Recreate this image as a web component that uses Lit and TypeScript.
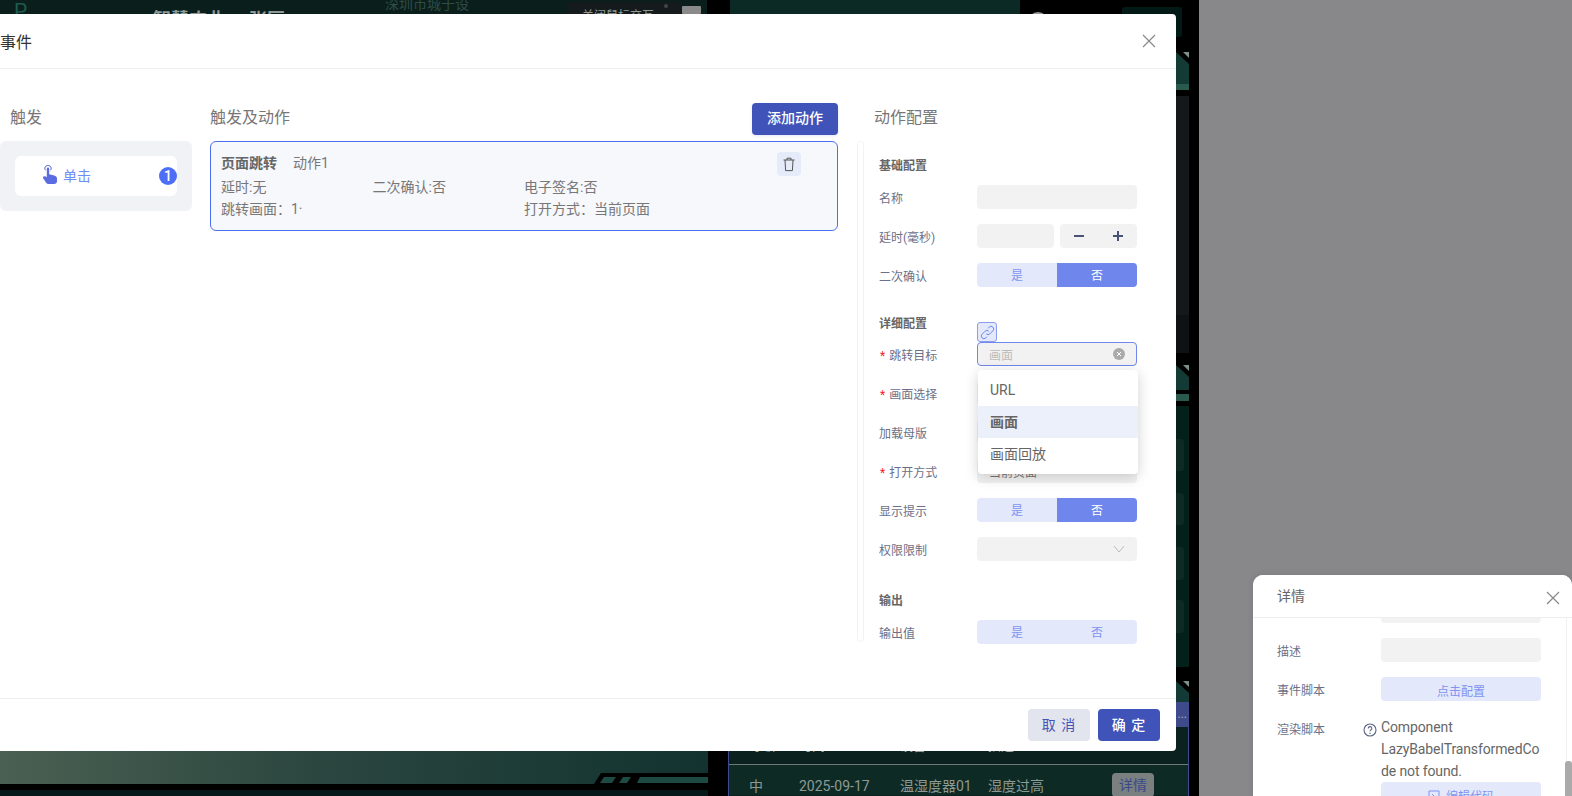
import { LitElement, html, css, svg } from "lit";
import { customElement } from "lit/decorators.js";

const closeIcon = html`<svg class="x" viewBox="0 0 14 14" width="14" height="14"><path d="M1 1 13 13M13 1 1 13" fill="none" stroke="#888" stroke-width="1.2"/></svg>`;

const backdrop = svg`
  <defs>
    <linearGradient id="bar" x1="0" x2="1" y1="0" y2="0">
      <stop offset="0" stop-color="#4a6052"/>
      <stop offset=".45" stop-color="#2b463f"/>
      <stop offset="1" stop-color="#123330"/>
    </linearGradient>
  </defs>
  <rect width="1199" height="796" fill="#000"/>
  <rect width="707" height="14" fill="#0a1f1b"/>
  <rect x="567" y="2" width="115" height="12" fill="#151b1c"/>
  <rect x="682" y="6" width="19" height="8" rx="1" fill="#8a8a8a"/>
  <circle cx="666" cy="6" r="2" fill="#444"/>
  <rect x="730" width="290" height="14" fill="#0b2a25"/>
  <circle cx="1038" cy="22" r="10" fill="#999"/>
  <rect x="1122" y="7" width="60" height="30" rx="3" fill="#021a16"/>
  <text x="14" y="18" font-size="21" fill="#1d5a4e">P</text>
  <text x="153" y="26" font-size="18" font-weight="700" fill="#8f9a96">智慧农业</text>
  <text x="249" y="26" font-size="18" font-weight="700" fill="#8f9a96">张匣</text>
  <text x="385" y="9" font-size="14" fill="#2e4c46">深圳市城于设</text>
  <text x="582" y="20" font-size="12" fill="#8f9a96">关闭鼠标交互</text>

  <path d="M1170 52h6l13 12v20h-19z" fill="#133a35"/>
  <path d="M1183 52h6v6z" fill="#7d9088"/>
  <rect x="1170" y="84" width="19" height="6" fill="#2a5a4d"/>
  <rect x="1170" y="96" width="19" height="219" fill="#15171a"/>
  <rect x="1170" y="315" width="19" height="38" fill="#101112"/>
  <path d="M1170 365h6l13 12v13h-19z" fill="#133a35"/>
  <path d="M1183 365h6v6z" fill="#7d9088"/>
  <rect x="1170" y="394" width="19" height="7" fill="#2a5a4d"/>
  <rect x="1170" y="406" width="19" height="261" fill="#04201b"/>
  <rect x="1170" y="439" width="14" height="32" rx="4" fill="#0e2a25"/>
  <rect x="1170" y="493" width="14" height="32" rx="4" fill="#0e2a25"/>
  <rect x="1170" y="547" width="14" height="33" rx="4" fill="#0e2a25"/>
  <rect x="1170" y="600" width="14" height="33" rx="4" fill="#0e2a25"/>
  <path d="M1170 681h6l13 12v9h-19z" fill="#133a35"/>
  <path d="M1183 681h6v6z" fill="#7d9088"/>

  <rect y="745" width="708" height="39" fill="url(#bar)"/>
  <path d="M594 784l7-11h107v11z" fill="#000"/>
  <path d="M600 783l4-6h12l-4 6zM619 783l4-6h8l-4 6zM637 783l3-6h68v6z" fill="#1d4a42"/>
  <rect y="790" width="708" height="6" fill="#06191a"/>
`;

@customElement("app-root")
export class AppRoot extends LitElement {
  static styles = css`
    :host { display: block; position: relative; width: 1572px; height: 796px; overflow: hidden; background: #88888a;
      font-family: Roboto, "Noto Sans CJK SC", sans-serif; color: #666; font-size: 14px; }
    * { box-sizing: border-box; }
    .scene { position: absolute; left: 0; top: 0; font-family: Roboto, "Noto Sans CJK SC", sans-serif; }

    .table { position: absolute; left: 728px; top: 702px; width: 461px; height: 94px;
      border-left: 1px solid #3f4a8f; border-right: 1px solid #3f4a8f; background: #0b211f; }
    .t-title { height: 25px; background: #3e4a8a; color: #aab; display: flex; justify-content: flex-end; padding-right: 1px; line-height: 24px; font-size: 12px; }
    .t-row { display: grid; grid-template-columns: 50px 111px 89px 98px 111px; }
    .t-row.head { height: 38px; line-height: 37px; color: #aab3b0; border-bottom: 1px solid #6d7a78; font-size: 13px; }
    .t-row.body { height: 30px; background: #0e2a25; color: #8d9a94; line-height: 42px; }
    .c0 { padding-left: 20px; } .c1 { padding-left: 20px; } .c2 { padding-left: 10px; } .c3 { padding-left: 9px; }
    .c4 { padding: 8px 0 0 35px; }
    .t-btn { display: block; width: 42px; height: 24px; border-radius: 4px; background: #7a7f80; color: #3a4a8a; text-align: center; line-height: 24px; }

    .modal { position: absolute; left: -20px; top: 14px; width: 1196px; height: 737px; background: #fff; border-radius: 4px;
      display: flex; flex-direction: column; }
    .m-head { height: 54px; flex: none; padding: 0 20px 0 20px; display: flex; align-items: center; justify-content: space-between; font-size: 16px; color: #333; }
    .m-body { flex: 1; border-top: 1px solid #eee; padding: 34px 0 0 20px; display: grid; grid-template-columns: 192px 628px 1fr; column-gap: 18px; min-height: 0; }
    .m-foot { flex: none; height: 53px; border-top: 1px solid #eee; padding: 10px 16px 0 0; display: flex; justify-content: flex-end; gap: 8px; }
    .btn { height: 32px; width: 62px; border-radius: 4px; text-align: center; line-height: 32px; font-size: 14px; letter-spacing: 1px; }
    .cancel { background: #e2e5ee; color: #4254b8; }
    .ok { background: #4053b8; color: #fff; font-weight: 500; }

    .col-head { height: 38px; display: flex; justify-content: space-between; align-items: flex-start; font-size: 16px; color: #777; line-height: 29px; }
    .col-head.pad { padding-left: 10px; }
    .col-head.pad-cfg { padding-left: 18px; }
    .add { height: 32px; width: 86px; background: #4053b8; color: #fff; border-radius: 4px; text-align: center; line-height: 31px; font-size: 14px; font-weight: 500; box-shadow: 0 1px 3px rgba(64,83,184,.15); }

    .trig { height: 70px; background: #f1f2f6; border-radius: 6px; padding: 15px; }
    .trig-item { height: 40px; background: #fff; border-radius: 6px; padding-left: 28px; display: flex; align-items: center; gap: 6px; color: #6f8cf5; font-size: 14px; }
    .trig-item svg { margin-top: -3px; }
    .trig-text { margin-top: -2px; }
    .badge { margin-left: auto; width: 18px; height: 18px; border-radius: 50%; background: #4f6ef7; color: #fff; text-align: center; line-height: 18px; font-size: 14px; font-weight: 500; }

    .card { position: relative; height: 90px; background: #f6f8fc; border: 1px solid #4c6ef0; border-radius: 6px; padding: 10px; color: #777; line-height: 22px; font-size: 14px; }
    .card-top { display: flex; gap: 16px; margin-bottom: 2px; }
    .card-top b { color: #666; font-weight: 700; font-size: 14px; }
    .card-grid { display: grid; grid-template-columns: 151.5px 151.5px 152px; }
    .trash { position: absolute; right: 36px; top: 10px; width: 24px; height: 24px; background: #e6ebfa; border-radius: 4px; display: flex; align-items: center; justify-content: center; }

    .cfg { min-width: 0; }
    .cfg-wrap { display: flex; }
    .track { flex: none; width: 7px; height: 501px; margin-left: 1px; border: 1px solid #f3f3f3; border-radius: 4px; }
    .form { padding: 17px 0 0 15px; flex: none; }
    .sec { height: 16px; line-height: 16px; font-size: 12px; font-weight: 700; color: #666; margin-bottom: 11px; }
    .sec.s2 { margin-top: 29px; margin-bottom: 10px; }
    .sec.s3 { margin-top: 32px; }
    .row { position: relative; display: flex; align-items: center; height: 24px; margin-bottom: 15px; font-size: 12px; color: #6b7088; }
    .row:last-child { margin-bottom: 0; }
    .lab { width: 98px; flex: none; }
    .req { color: #f5222d; margin: 0 4px 0 1px; }
    .inp { width: 160px; height: 24px; border-radius: 4px; background: #f2f2f2; position: relative; display: flex; align-items: center; padding-top: 1px; }
    .short { width: 77px; }
    .stepper { width: 77px; height: 24px; margin-left: 6px; background: #f2f2f2; border-radius: 4px; display: flex; align-items: center; justify-content: space-around; }
    .toggle { width: 160px; height: 24px; border-radius: 4px; background: #e3e8fb; display: grid; grid-template-columns: 1fr 1fr; overflow: hidden; text-align: center; line-height: 26px; color: #7f94f0; }
    .on { background: #6f87ec; color: #fff; }
    .link { position: absolute; left: 98px; top: -20px; width: 20px; height: 20px; border: 1px solid #8a9ef0; border-radius: 3px; background: #e3e8fb; display: flex; align-items: center; justify-content: center; }
    .sel { border: 1px solid #6f87ee; padding-left: 11px; color: #bbb; }
    .clear { position: absolute; right: 11px; top: 5px; }
    .chev { position: absolute; right: 12px; top: 8px; }
    .peek { padding-left: 12px; color: #777; }
    .drop { position: absolute; left: 99px; top: 28px; width: 160px; height: 104px; padding: 4px 0; background: #fff; border-radius: 4px; box-shadow: 0 3px 14px rgba(0,0,0,.18); z-index: 2; font-size: 14px; color: #666; }
    .opt { height: 32px; line-height: 32px; padding-left: 12px; }
    .opt.act { background: #ecf0fa; font-weight: 700; }

    .drawer { position: absolute; left: 1253px; top: 575px; width: 319px; height: 221px; overflow: hidden; background: #fff; border-radius: 10px 10px 0 0; box-shadow: 0 0 6px rgba(0,0,0,.1); }
    .d-head { height: 43px; border-bottom: 1px solid #eee; padding: 0 12px 0 24px; display: flex; align-items: center; justify-content: space-between; font-size: 14px; color: #666; position: relative; z-index: 1; background: #fff; }
    .d-head span { margin-top: -3px; }
    .d-head svg { margin-top: 4px; }
    .d-body { height: 197px; overflow: hidden; padding-left: 24px; margin-top: -19px; font-size: 12px; color: #6b7088; }
    .d-row { display: flex; margin-bottom: 15px; }
    .d-row.flush { margin-bottom: 0; }
    .d-lab { width: 104px; height: 24px; flex: none; line-height: 28px; position: relative; }
    .help { position: absolute; right: 4px; top: 7px; }
    .d-val { width: 160px; height: 24px; background: #f2f2f2; border-radius: 4px; }
    .d-btn { width: 160px; height: 24px; background: #e3e8fb; border-radius: 4px; color: #7f94f0; padding-top: 3px; display: flex; gap: 6px; align-items: center; justify-content: center; }
    .d-text { width: 160px; height: 66px; font-size: 14px; color: #666; line-height: 22px; letter-spacing: -.12px; overflow-wrap: anywhere; }
    .sb-line { position: absolute; left: 1566px; top: 618px; width: 1px; height: 178px; background: #f0f0f0; }
    .sb { position: absolute; left: 1565px; top: 761px; width: 7px; height: 35px; background: #aaa; border-radius: 3px 3px 0 0; }
  `;

  private yesNo(on: boolean) {
    return html`<div class="toggle"><span>是</span><span class=${on ? "on" : ""}>否</span></div>`;
  }

  render() {
    return html`
      <svg class="scene" width="1572" height="796" viewBox="0 0 1572 796">${backdrop}</svg>

      <div class="table">
        <div class="t-title"><span>...</span></div>
        <div class="t-row head"><span class="c0">等级</span><span class="c1">时间</span><span class="c2">设备</span><span class="c3">描述</span><span></span></div>
        <div class="t-row body">
          <span class="c0">中</span><span class="c1">2025-09-17</span><span class="c2">温湿度器01</span><span class="c3">湿度过高</span>
          <span class="c4"><span class="t-btn">详情</span></span>
        </div>
      </div>

      <section class="drawer">
        <div class="d-head"><span>详情</span>${closeIcon}</div>
        <div class="d-body">
          <div class="d-row"><span class="d-lab"></span><div class="d-val"></div></div>
          <div class="d-row"><span class="d-lab">描述</span><div class="d-val"></div></div>
          <div class="d-row"><span class="d-lab">事件脚本</span><div class="d-btn">点击配置</div></div>
          <div class="d-row flush"><span class="d-lab">渲染脚本
            <svg class="help" width="14" height="14" viewBox="0 0 14 14"><circle cx="7" cy="7" r="6" fill="none" stroke="#5a6285" stroke-width="1.1"/><path d="M5.2 5.4a1.8 1.8 0 1 1 2.6 1.6c-.6.3-.8.6-.8 1.2" fill="none" stroke="#5a6285" stroke-width="1.1"/><circle cx="7" cy="10.2" r=".7" fill="#5a6285"/></svg></span>
            <div class="d-text">Component LazyBabelTransformedCode not found.</div></div>
          <div class="d-row"><span class="d-lab"></span><div class="d-btn">
            <svg width="12" height="12" viewBox="0 0 12 12"><path d="M1 1h10v10H1zM4 4l2 2-2 2" fill="none" stroke="#7f94f0"/></svg>编辑代码</div></div>
        </div>
      </section>
      <div class="sb-line"></div>
      <div class="sb"></div>

      <section class="modal">
        <header class="m-head"><span>事件</span>${closeIcon}</header>
        <div class="m-body">
          <div>
            <div class="col-head pad"><span>触发</span></div>
            <div class="trig">
              <div class="trig-item">
                <svg width="14" height="19" viewBox="0 0 14 19">
                  <path d="M2.3 5.2a3.2 3.2 0 1 1 5.4 0" fill="none" stroke="#5b6be0" stroke-width="1"/>
                  <path d="M3.8 3.8a1.2 1.2 0 0 1 2.4 0v5.4l5 1.2c1.6.4 2.8 1.4 2.8 3V16a3 3 0 0 1-3 3H6c-1.3 0-2.2-.6-3-1.6L.3 13.4c-.6-1-.2-1.9.7-2.2.8-.2 1.6 0 2.8 1z" fill="#5b6be0"/>
                </svg>
                <span class="trig-text">单击</span><span class="badge">1</span>
              </div>
            </div>
          </div>
          <div>
            <div class="col-head"><span>触发及动作</span><span class="add">添加动作</span></div>
            <div class="card">
              <div class="card-top"><b>页面跳转</b><span>动作1</span></div>
              <div class="card-grid">
                <span>延时:无</span><span>二次确认:否</span><span>电子签名:否</span>
                <span>跳转画面：1·</span><span></span><span>打开方式：当前页面</span>
              </div>
              <div class="trash">
                <svg width="14" height="15" viewBox="0 0 14 15"><path d="M1.5 3h11M5 3V1.2h4V3M3 3l.6 10.6h6.8L11 3" fill="none" stroke="#555" stroke-width="1"/></svg>
              </div>
            </div>
          </div>
          <div class="cfg">
            <div class="col-head pad-cfg"><span>动作配置</span></div>
            <div class="cfg-wrap">
              <div class="track"></div>
              <div class="form">
                <div class="sec">基础配置</div>
                <div class="row"><span class="lab">名称</span><div class="inp"></div></div>
                <div class="row"><span class="lab">延时(毫秒)</span><div class="inp short"></div>
                  <div class="stepper">
                    <svg width="12" height="12" viewBox="0 0 12 12"><path d="M1 6h10" stroke="#4a5275" stroke-width="2"/></svg>
                    <svg width="12" height="12" viewBox="0 0 12 12"><path d="M1 6h10M6 1v10" stroke="#4a5275" stroke-width="2"/></svg>
                  </div></div>
                <div class="row"><span class="lab">二次确认</span>${this.yesNo(true)}</div>

                <div class="sec s2">详细配置</div>
                <div class="row"><span class="lab"><span class="req">*</span>跳转目标</span>
                  <div class="link"><svg width="15" height="15" viewBox="0 0 15 15"><path d="M6.2 8.8a2.6 2.6 0 0 0 3.7 0l3-3a2.6 2.6 0 0 0-3.7-3.7l-1.2 1.2M8.8 6.2a2.6 2.6 0 0 0-3.7 0l-3 3a2.6 2.6 0 0 0 3.7 3.7l1.2-1.2" fill="none" stroke="#6f87ee" stroke-width="1"/></svg></div>
                  <div class="inp sel">画面
                    <svg class="clear" width="12" height="12" viewBox="0 0 12 12"><circle cx="6" cy="6" r="6" fill="#aaa"/><path d="M4 4l4 4M8 4l-4 4" stroke="#fff"/></svg>
                  </div>
                  <div class="drop">
                    <div class="opt">URL</div>
                    <div class="opt act">画面</div>
                    <div class="opt">画面回放</div>
                  </div>
                </div>
                <div class="row"><span class="lab"><span class="req">*</span>画面选择</span><div class="inp"></div></div>
                <div class="row"><span class="lab">加载母版</span><div class="inp"></div></div>
                <div class="row"><span class="lab"><span class="req">*</span>打开方式</span><div class="inp peek">当前页面</div></div>
                <div class="row"><span class="lab">显示提示</span>${this.yesNo(true)}</div>
                <div class="row"><span class="lab">权限限制</span><div class="inp">
                  <svg class="chev" width="12" height="8" viewBox="0 0 12 8"><path d="M1 1l5 6 5-6" fill="none" stroke="#bbb"/></svg></div></div>

                <div class="sec s3">输出</div>
                <div class="row"><span class="lab">输出值</span>${this.yesNo(false)}</div>
              </div>
            </div>
          </div>
        </div>
        <footer class="m-foot"><span class="btn cancel">取 消</span><span class="btn ok">确 定</span></footer>
      </section>
    `;
  }
}
